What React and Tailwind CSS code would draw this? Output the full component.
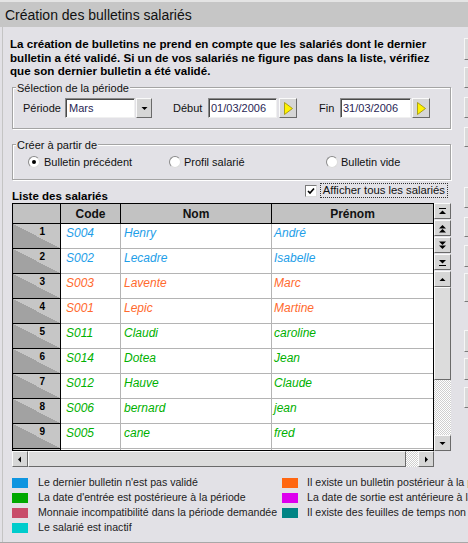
import React from 'react'

// Liste des salariés affichés dans la grille
const rows = [
  { n: 1, code: 'S004', nom: 'Henry', prenom: 'André', tone: 'blue' },
  { n: 2, code: 'S002', nom: 'Lecadre', prenom: 'Isabelle', tone: 'blue' },
  { n: 3, code: 'S003', nom: 'Lavente', prenom: 'Marc', tone: 'orange' },
  { n: 4, code: 'S001', nom: 'Lepic', prenom: 'Martine', tone: 'orange' },
  { n: 5, code: 'S011', nom: 'Claudi', prenom: 'caroline', tone: 'green' },
  { n: 6, code: 'S014', nom: 'Dotea', prenom: 'Jean', tone: 'green' },
  { n: 7, code: 'S012', nom: 'Hauve', prenom: 'Claude', tone: 'green' },
  { n: 8, code: 'S006', nom: 'bernard', prenom: 'jean', tone: 'green' },
  { n: 9, code: 'S005', nom: 'cane', prenom: 'fred', tone: 'green' },
  { n: 10, code: '', nom: '', prenom: '', tone: 'green' },
]

const toneClass = {
  blue: 'text-[#1e9ee8]',
  orange: 'text-[#ff6a2e]',
  green: 'text-[#00b000]',
}

const legendLeft = [
  { color: 'bg-[#0e95e0]', label: "Le dernier bulletin n'est pas validé" },
  { color: 'bg-[#00a800]', label: "La date d'entrée est postérieure à la période" },
  { color: 'bg-[#c84c6a]', label: 'Monnaie incompatibilité dans la période demandée' },
  { color: 'bg-[#00cccc]', label: 'Le salarié est inactif' },
]

const legendRight = [
  { color: 'bg-[#ff6611]', label: 'Il existe un bulletin postérieur à la période' },
  { color: 'bg-[#dd00ee]', label: 'La date de sortie est antérieure à la période' },
  { color: 'bg-[#008484]', label: 'Il existe des feuilles de temps non validées' },
]

const raised =
  'bg-[#d6d6d6] border border-t-[#fafafa] border-l-[#fafafa] border-r-[#6a6a6a] border-b-[#6a6a6a]'
const inset =
  'bg-white border border-t-[#8a8a8a] border-l-[#8a8a8a] border-r-[#f0f0f0] border-b-[#f0f0f0] shadow-[inset_1px_1px_0_#4a4a4a]'
const etched =
  'border border-[#a4a4a4] shadow-[inset_1px_1px_0_#ffffff,1px_1px_0_#ffffff]'
const checker =
  'bg-[image:repeating-conic-gradient(#ffffff_0_25%,#cfcfcf_0_50%)] bg-[length:2px_2px]'

const YellowArrow = () => (
  <svg width="9" height="13" viewBox="0 0 9 13">
    <polygon points="0.5,0.5 8.5,6.5 0.5,12.5" fill="#fff200" stroke="#9c9000" strokeWidth="0.8" />
  </svg>
)

const Tri = ({ dir }) => {
  const pts = {
    up: '0.5,5 3.5,2 6.5,5',
    down: '0.5,2 3.5,5 6.5,2',
    left: '4,0.5 1,3.5 4,6.5',
    right: '2,0.5 5,3.5 2,6.5',
  }
  return (
    <svg width="7" height="7" viewBox="0 0 7 7">
      <polygon points={pts[dir]} fill="#000" />
    </svg>
  )
}

const NavIcon = ({ kind }) => (
  <svg width="9" height="9" viewBox="0 0 9 9">
    {kind === 'top' && (
      <>
        <rect x="1" y="1" width="7" height="1" fill="#000" />
        <polygon points="1,7 4.5,3.5 8,7" fill="#000" />
      </>
    )}
    {kind === 'up2' && (
      <>
        <polygon points="1,4.5 4.5,1 8,4.5" fill="#000" />
        <polygon points="1,8.5 4.5,5 8,8.5" fill="#000" />
      </>
    )}
    {kind === 'down2' && (
      <>
        <polygon points="1,0.5 4.5,4 8,0.5" fill="#000" />
        <polygon points="1,4.5 4.5,8 8,4.5" fill="#000" />
      </>
    )}
    {kind === 'bottom' && (
      <>
        <polygon points="1,2 4.5,5.5 8,2" fill="#000" />
        <rect x="1" y="7" width="7" height="1" fill="#000" />
      </>
    )}
  </svg>
)

const Radio = ({ checked }) => (
  <span className="w-[12px] h-[12px] rounded-full bg-white border border-t-[#8a8a8a] border-l-[#8a8a8a] border-r-[#dcdcdc] border-b-[#dcdcdc] flex items-center justify-center shrink-0">
    {checked && <span className="w-[4px] h-[4px] rounded-full bg-black" />}
  </span>
)

const SideButton = ({ className }) => (
  <div className={`w-[20px] shrink-0 bg-[#dadada] border-t border-l border-[#f6f6f6] border-b border-b-[#7a7a7a] ${className}`} />
)

const App = () => {
  return (
    <div className="w-[468px] h-[543px] overflow-hidden bg-[#e2e1e6] flex flex-col font-['Liberation_Sans',Arial,sans-serif] text-[#111]">
      {/* Barre de titre */}
      <div className="h-[27px] shrink-0 bg-[#c6c6c6] border-t-2 border-[#e4e4e4] flex items-center pl-[5px]">
        <span className="text-[14px] leading-[16px]">Création des bulletins salariés</span>
      </div>

      <div className="flex flex-1 border-b border-[#a8a8a8]">
        {/* Colonne principale */}
        <div className="w-[462px] shrink-0 flex flex-col border-l border-[#c4c4c4] ml-[2px]">
          <p className="mt-[10px] h-[41px] pl-[7px] text-[11.6px] leading-[13.5px] font-bold text-black whitespace-nowrap">
            La création de bulletins ne prend en compte que les salariés dont le dernier
            <br />
            bulletin a été validé. Si un de vos salariés ne figure pas dans la liste, vérifiez
            <br />
            que son dernier bulletin a été validé.
          </p>

          {/* Sélection de la période */}
          <div className={`relative mt-[9px] ml-[9px] w-[439px] h-[42px] pt-[10px] ${etched}`}>
            <span className="absolute left-[3px] -top-[7px] px-[1px] bg-[#e2e1e6] text-[11px] leading-[14px]">
              Sélection de la période
            </span>
            <div className="flex items-center h-[20px] text-[11px]">
              <span className="ml-[10px] w-[42px]">Période</span>
              <div className={`w-[70px] h-[20px] flex items-center pl-[3px] text-[#2a1f55] ${inset}`}>Mars</div>
              <div className={`ml-[1px] w-[16px] h-[20px] flex items-center justify-center ${raised}`}>
                <Tri dir="down" />
              </div>
              <span className="ml-[21px] w-[35px]">Début</span>
              <div className={`w-[69px] h-[20px] flex items-center pl-[2px] text-[#2a1f55] ${inset}`}>01/03/2006</div>
              <div className={`ml-[2px] w-[18px] h-[20px] flex items-center justify-center ${raised}`}>
                <YellowArrow />
              </div>
              <span className="ml-[22px] w-[21px]">Fin</span>
              <div className={`w-[71px] h-[20px] flex items-center pl-[2px] text-[#2a1f55] ${inset}`}>31/03/2006</div>
              <div className={`ml-[1px] w-[18px] h-[20px] flex items-center justify-center ${raised}`}>
                <YellowArrow />
              </div>
            </div>
          </div>

          {/* Créer à partir de */}
          <div className={`relative mt-[15px] ml-[9px] w-[439px] h-[36px] pt-[11px] ${etched}`}>
            <span className="absolute left-[3px] -top-[7px] px-[1px] bg-[#e2e1e6] text-[11px] leading-[14px]">
              Créer à partir de
            </span>
            <div className="flex items-center h-[12px] text-[11px]">
              <label className="ml-[15px] w-[141px] flex items-center gap-[4px]">
                <Radio checked />
                <span>Bulletin précédent</span>
              </label>
              <label className="w-[157px] flex items-center gap-[3px]">
                <Radio />
                <span>Profil salarié</span>
              </label>
              <label className="flex items-center gap-[3px]">
                <Radio />
                <span>Bulletin vide</span>
              </label>
            </div>
          </div>

          {/* Titre de la liste + case à cocher */}
          <div className="h-[23px] flex justify-between">
            <span className="self-end ml-[9px] text-[11.5px] leading-[14px] font-bold text-black">Liste des salariés</span>
            <div className="flex items-start mr-[16px] mt-[3px]">
              <span className="mt-[2px] w-[12px] h-[12px] bg-white border border-t-[#7a7a7a] border-l-[#7a7a7a] border-r-[#dcdcdc] border-b-[#dcdcdc] flex items-center justify-center">
                <svg width="8" height="8" viewBox="0 0 8 8">
                  <polyline points="1,4 3,6 7,1.5" fill="none" stroke="#000" strokeWidth="1.6" />
                </svg>
              </span>
              <span className="ml-[3px] h-[15px] px-[2px] border border-dotted border-[#333] text-[11.3px] leading-[13px]">
                Afficher tous les salariés
              </span>
            </div>
          </div>

          {/* Grille */}
          <div className="flex ml-[9px]">
            <div className="w-[422px] h-[248px] border border-black bg-white overflow-hidden">
              <div className="flex h-[20px] bg-[#c2c2c2] border-b border-black text-[12px] font-bold">
                <div className="w-[48px] border-r border-black" />
                <div className="w-[60px] border-r border-black flex items-center justify-center">Code</div>
                <div className="w-[151px] border-r border-black flex items-center justify-center">Nom</div>
                <div className="w-[161px] flex items-center justify-center">Prénom</div>
              </div>
              {rows.map((r) => (
                <div key={r.n} className={`flex h-[25px] text-[12px] italic ${toneClass[r.tone]}`}>
                  <div className="w-[48px] border-r border-b border-black bg-[image:linear-gradient(to_top_right,#a2a2a2_50%,#c6c6c6_50%)] text-right pr-[15px] pt-[2px] text-[10px] leading-[12px] font-bold not-italic text-black">
                    {r.code ? r.n : ''}
                  </div>
                  <div className="w-[60px] border-r border-b border-[#b4b4b4] pl-[5px] pt-[2px] leading-[14px]">{r.code}</div>
                  <div className="w-[151px] border-r border-b border-[#b4b4b4] pl-[3px] pt-[2px] leading-[14px]">{r.nom}</div>
                  <div className="w-[161px] border-b border-[#b4b4b4] pl-[2px] pt-[2px] leading-[14px]">{r.prenom}</div>
                </div>
              ))}
            </div>

            {/* Barre verticale */}
            <div className="w-[17px] h-[248px] flex flex-col">
              <div className={`h-[16px] flex items-center justify-center ${raised}`}><NavIcon kind="top" /></div>
              <div className={`mt-[1px] h-[16px] flex items-center justify-center ${raised}`}><NavIcon kind="up2" /></div>
              <div className={`mt-[1px] h-[16px] flex items-center justify-center ${raised}`}><NavIcon kind="down2" /></div>
              <div className={`mt-[1px] h-[16px] flex items-center justify-center ${raised}`}><NavIcon kind="bottom" /></div>
              <div className={`mt-[1px] h-[16px] flex items-center justify-center ${raised}`}><Tri dir="up" /></div>
              <div className="h-[93px] bg-[#dcdcdc] border border-t-[#fafafa] border-l-[#fafafa] border-r-[#6a6a6a] border-b-[#6a6a6a]" />
              <div className={`flex-1 ${checker}`} />
              <div className={`h-[16px] flex items-center justify-center ${raised}`}><Tri dir="down" /></div>
            </div>
          </div>

          {/* Barre horizontale */}
          <div className="ml-[9px] w-[422px] h-[16px] flex">
            <div className={`w-[16px] flex items-center justify-center ${raised}`}><Tri dir="left" /></div>
            <div className="flex-1 bg-[#dcdcdc] border border-t-[#fafafa] border-l-[#fafafa] border-r-[#6a6a6a] border-b-[#6a6a6a]" />
            <div className={`w-[12px] ${checker}`} />
            <div className={`w-[16px] flex items-center justify-center ${raised}`}><Tri dir="right" /></div>
          </div>

          {/* Légende */}
          <div className="mt-[8px] ml-[9px] flex text-[10.6px] leading-[15px] text-[#222] whitespace-nowrap">
            <div className="w-[270px] shrink-0 flex flex-col">
              {legendLeft.map((item) => (
                <div key={item.label} className="h-[15px] flex items-center gap-[10px]">
                  <span className={`w-[16px] h-[10px] shrink-0 ${item.color}`} />
                  <span>{item.label}</span>
                </div>
              ))}
            </div>
            <div className="flex flex-col">
              {legendRight.map((item) => (
                <div key={item.label} className="h-[15px] flex items-center gap-[9px]">
                  <span className={`w-[16px] h-[10px] shrink-0 ${item.color}`} />
                  <span>{item.label}</span>
                </div>
              ))}
            </div>
          </div>
        </div>

        {/* Boutons d'action coupés à droite */}
        <div className="flex flex-col">
          <SideButton className="mt-[11px] h-[22px]" />
          <SideButton className="mt-[7px] h-[21px]" />
          <SideButton className="mt-[9px] h-[21px]" />
          <SideButton className="mt-[9px] h-[20px]" />
          <SideButton className="mt-[40px] h-[21px]" />
          <SideButton className="mt-[9px] h-[20px]" />
          <SideButton className="mt-[8px] h-[22px]" />
          <SideButton className="mt-[6px] h-[29px]" />
          <SideButton className="mt-[28px] h-[22px]" />
          <SideButton className="mt-[6px] h-[22px]" />
          <SideButton className="mt-[7px] h-[21px]" />
        </div>
      </div>
    </div>
  )
}

export default App
